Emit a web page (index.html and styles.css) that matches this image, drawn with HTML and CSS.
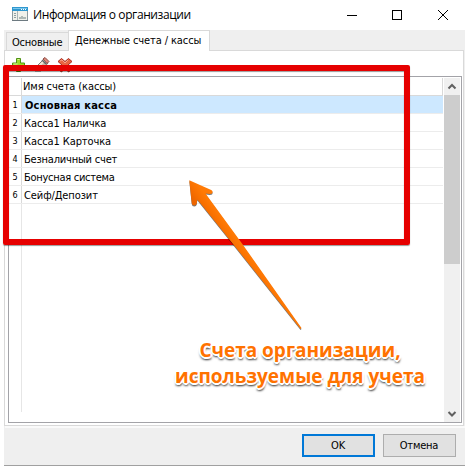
FILE: index.html
```
<!DOCTYPE html>
<html lang="ru">
<head>
<meta charset="utf-8">
<title>Информация о организации</title>
<link rel="stylesheet" href="styles.css">
</head>
<body>
<div class="window">
  <header class="titlebar">
    <svg class="app-icon" width="16" height="15" viewBox="0 0 16 15"><rect x=".5" y=".5" width="15" height="13" fill="#f1f1ea" stroke="#8c9a9f"/><rect x="0" y="0" width="16" height="4" fill="#2f97cf"/><path d="M1 1.500h14" stroke="#7cc8ec"/><path d="M9 2.500h1M11 2.500h1M13 2.500h1" stroke="#fff"/><path d="M5.500 4v9" stroke="#a9b4b6"/><path d="M2 6.500h2M2 8.500h2M2 10.500h2" stroke="#8fa0a3"/><path d="M7 12v-2h2V9h2v1h3v2z" fill="#aeb8b5"/><path d="M0 13.500h16" stroke="#6d7a81"/></svg>
    <h1 class="title">Информация о организации</h1>
    <svg class="controls" width="104" height="14" viewBox="0 0 104 14" fill="none" stroke="#000"><path d="M0 7.500h10"/><rect x="45.500" y="2.500" width="9" height="9"/><path d="M91 2l10 10M101 2l-10 10"/></svg>
  </header>
  <nav class="tabs">
    <div class="tab tab-main">Основные</div>
    <div class="tab tab-cash">Денежные счета / кассы</div>
  </nav>
  <main class="page">
    <div class="toolbar">
      <svg width="16" height="18" viewBox="0 0 16 18"><path d="M5.500 1.500h4v4.500h4v4h-4v4.500h-4V10h-4V6h4z" fill="#9bdb28" stroke="#4f9215"/><path d="M6.500 2.500h2M2.500 7h4" stroke="#d9f59a"/></svg>
      <svg width="16" height="18" viewBox="0 0 16 18"><path d="M1 14l2-5 7-7 4 4-7 8z" fill="#c8b9a5" stroke="#756e66"/><path d="M4 10l7-7" stroke="#f0e6d4" stroke-width="2"/><path d="M9 2l2-1.500 4 4-2 2z" fill="#d98779" stroke="#8c4b43"/><path d="M8 3l4 4" stroke="#5f6668" stroke-width="1.500"/></svg>
      <svg width="16" height="18" viewBox="0 0 16 18"><path d="M4.500 1.500L8 4.500l3.500-3L15 4.500 11 8l4 4-3.500 3L8 11l-3.500 4L1 12l4-4-4-3.500z" fill="#e96442" stroke="#a82c20"/><path d="M3 4l2-1 3 3 3-3" fill="none" stroke="#f5a28a"/></svg>
    </div>
    <div class="grid">
      <div class="list">
        <div class="row head"><span class="num"></span><span class="cell">Имя счета (кассы)</span></div>
        <div class="row selected"><span class="num">1</span><span class="cell">Основная касса</span></div>
        <div class="row"><span class="num">2</span><span class="cell">Касса1 Наличка</span></div>
        <div class="row"><span class="num">3</span><span class="cell">Касса1 Карточка</span></div>
        <div class="row tight"><span class="num">4</span><span class="cell">Безналичный счет</span></div>
        <div class="row tighter"><span class="num">5</span><span class="cell">Бонусная система</span></div>
        <div class="row"><span class="num">6</span><span class="cell">Сейф/Депозит</span></div>
        <div class="gutter"></div>
      </div>
      <div class="scrollbar">
        <svg width="16" height="17" viewBox="0 0 16 17"><path d="M4.500 10.500L8 7l3.500 3.500" fill="none" stroke="#606060" stroke-width="2"/></svg>
        <div class="thumb"></div>
        <svg class="down" width="16" height="17" viewBox="0 0 16 17"><path d="M4.500 7L8 10.500 11.500 7" fill="none" stroke="#606060" stroke-width="2"/></svg>
      </div>
    </div>
  </main>
  <footer class="actions">
    <button class="btn primary">OK</button>
    <button class="btn">Отмена</button>
  </footer>
</div>
<div class="highlight"></div>
<svg class="arrow" width="130" height="160" viewBox="180 175 130 160">
  <defs><linearGradient id="shaft" gradientUnits="userSpaceOnUse" x1="213" y1="228" x2="224" y2="220"><stop offset="0" stop-color="#ec6500"/><stop offset=".5" stop-color="#f87000"/><stop offset="1" stop-color="#ff7a05"/></linearGradient></defs>
  <path d="M189.300 180.200L211.200 189.900Q213.500 191.300 212 193.400Q211 194.300 205.500 193.500L242 243.500L301.500 328L300.500 329L231 241.500L197.300 199.500L196.800 203.500Q196.300 205.700 194.200 205.600Q192 205.500 191.700 203z" fill="url(#shaft)"/>
</svg>
<div class="caption"><span>Счета организации,</span><span>используемые для учета</span></div>
</body>
</html>
```
FILE: styles.css
```
* { box-sizing: border-box; }
body {
  margin: 0; width: 465px; height: 466px; overflow: hidden; position: relative;
  background: #fff; color: #000;
  font: 11px/18px "DejaVu Sans Condensed", "DejaVu Sans", sans-serif; font-stretch: condensed;
  letter-spacing: -.1px;
}
.window {
  margin-left: 4px; width: 461px; height: 466px;
  display: flex; flex-direction: column;
  background: #efefef; border-bottom: 1px solid #a0a0a0;
}
.titlebar { height: 30px; display: flex; align-items: center; background: #fff; padding-left: 8px; }
.app-icon { flex: none; margin-top: -1px; }
.title { margin: 0 0 0 5px; width: 314px; font: 12px/16px "Open Sans", sans-serif; letter-spacing: -.4px; white-space: nowrap; }
.controls { flex: none; }
.tabs { height: 20px; display: flex; align-items: flex-end; padding-left: 2px; }
.tab { height: 18px; border: 1px solid #d9d9d9; border-bottom: 0; white-space: nowrap; line-height: 19px; }
.tab-main { width: 62px; padding-left: 5px; border-right: 0; letter-spacing: -.2px; }
.tab-cash { width: 142px; height: 21px; margin-bottom: -1px; padding-left: 6px; background: #fff; position: relative; }
.page { height: 376px; width: 460px; background: #fff; border: 1px solid #d9d9d9; padding: 0 1px 2px 3px; }
.toolbar { height: 25px; display: flex; gap: 7px; padding: 6px 0 0 3px; }
.grid { height: 347px; width: 454px; border: 1px solid #a3a3a8; display: flex; padding: 1px 1px 0 0; }
.list { width: 434px; display: flex; flex-direction: column; }
.row { height: 18px; display: flex; flex: none; border-bottom: 1px solid #ececec; line-height: 19px; }
.row.head { border-right: 1px solid #d9d9d9; border-bottom-color: #d9d9d9; line-height: 18px; }
.num { width: 13px; flex: none; border-right: 1px solid #d9d9d9; text-align: center; font-size: 9px; line-height: 18px; }
.cell { flex: 1; padding-left: 2px; white-space: nowrap; }
.head .cell { padding-left: 1px; }
.tight .cell { letter-spacing: -.2px; }
.tighter .cell { letter-spacing: -.28px; }
.selected .cell { background: #cde8ff; font-weight: bold; padding-left: 3px; letter-spacing: .2px; }
.gutter { width: 13px; flex: 1; border-right: 1px solid #e6e6e6; margin-bottom: 10px; }
.scrollbar { width: 16px; margin-left: 1px; background: #f0f0f0; display: flex; flex-direction: column; }
.scrollbar svg { flex: none; }
.thumb { height: 169px; background: #cdcdcd; }
.down { margin-top: auto; }
.actions { flex: 1; display: flex; gap: 8px; padding: 6px 9px 0; justify-content: flex-end; border-top: 2px solid #fafafa; margin-left: 1px; }
.btn { width: 73px; height: 23px; padding: 0 1px 0 0; background: #e1e1e1; border: 1px solid #adadad; color: #000; font: inherit; letter-spacing: -.2px; }
.btn.primary { border: 2px solid #0078d7; }
.highlight {
  position: absolute; left: 3px; top: 65px; width: 407px; height: 180px;
  border: 6px solid #e60000; border-radius: 2px; box-shadow: 0 1px 1px #0006, inset 0 1px 1px #0006;
}
.arrow { position: absolute; left: 180px; top: 175px; filter: drop-shadow(0 1px .5px #0008); }
.caption {
  position: absolute; left: 150px; top: 337px; width: 300px;
  display: flex; flex-direction: column; align-items: center;
  font: bold 19px/26px "Open Sans", sans-serif; letter-spacing: 0; color: #ff7200; white-space: nowrap;
  text-shadow: 2px 0 #fff, -2px 0 #fff, 0 2px #fff, 0 -2px #fff, 1px 1px #fff, -1px 1px #fff, 1px -1px #fff, -1px -1px #fff, 1px 3px 2px #0009, -1px 3px 2px #0006;
}
```
